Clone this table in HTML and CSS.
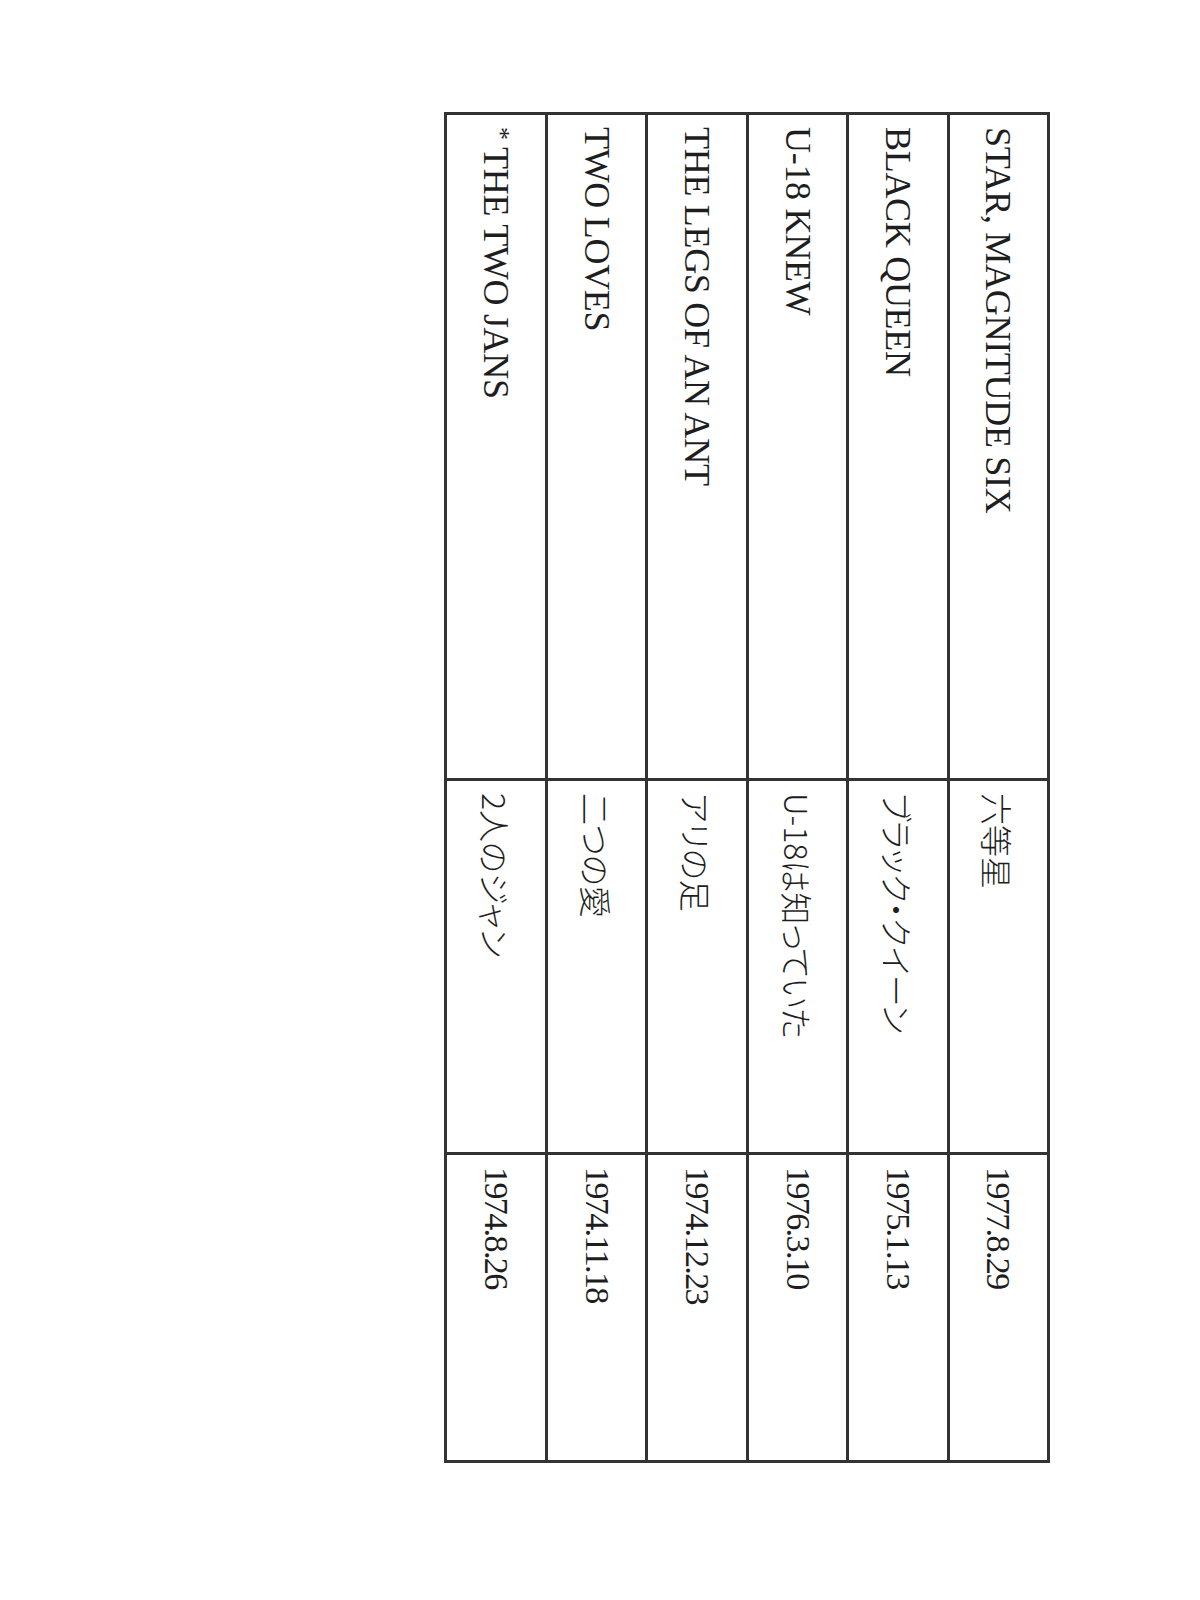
FILE: index.html
```html
<!DOCTYPE html>
<html lang="ja">
<head>
<meta charset="utf-8">
<title>Works list</title>
<link rel="stylesheet" href="styles.css">
</head>
<body>
<div class="page">
  <table class="works">
    <tbody>
      <tr>
        <td class="c1 en">STAR, MAGNITUDE SIX</td>
        <td class="c2 ja">六等星</td>
        <td class="c3 date">1977.8.29</td>
      </tr>
      <tr>
        <td class="c1 en">BLACK QUEEN</td>
        <td class="c2 ja">ブラック・クイーン</td>
        <td class="c3 date">1975.1.13</td>
      </tr>
      <tr>
        <td class="c1 en">U-18 KNEW</td>
        <td class="c2 ja">U-18は知っていた</td>
        <td class="c3 date">1976.3.10</td>
      </tr>
      <tr>
        <td class="c1 en">THE LEGS OF AN ANT</td>
        <td class="c2 ja">アリの足</td>
        <td class="c3 date">1974.12.23</td>
      </tr>
      <tr>
        <td class="c1 en">TWO LOVES</td>
        <td class="c2 ja">二つの愛</td>
        <td class="c3 date">1974.11.18</td>
      </tr>
      <tr class="last">
        <td class="c1 en"><span class="mark">*</span>THE TWO JANS</td>
        <td class="c2 ja">2人のジャン</td>
        <td class="c3 date">1974.8.26</td>
      </tr>
    </tbody>
  </table>
</div>
</body>
</html>
```

FILE: styles.css
```css
html, body {
  margin: 0;
  padding: 0;
  background: #ffffff;
}

.page {
  padding: 112px 0 0 444px;
}

.works {
  writing-mode: vertical-rl;
  text-orientation: sideways;
  border-collapse: separate;
  border-spacing: 0;
  border: 3px solid #333333;
  width: 606px;
  height: 1351px;
  color: #1e1e1e;
}

.works td {
  box-sizing: border-box;
  block-size: 100.4px;
  vertical-align: middle;
  padding: 0;
  padding-inline-start: 12px;
  border-left: 3px solid #333333;
  white-space: nowrap;
  text-align: start;
}

.works tr.last td {
  border-left: none;
  block-size: 98px;
}

.works td.c1,
.works td.c2 {
  border-bottom: 3px solid #333333;
}

.c1 { inline-size: 666px; }
.c2 { inline-size: 374px; }
.c3 { inline-size: 305px; }

.en {
  font-family: "Liberation Serif", "Times New Roman", serif;
  font-size: 36px;
  letter-spacing: -0.3px;
  line-height: 1;
}

.ja {
  font-family: "Noto Sans CJK JP", sans-serif;
  font-size: 32px;
  font-weight: 300;
  font-feature-settings: "palt";
  line-height: 1;
  padding-inline-start: 14px;
}

.date {
  font-family: "Liberation Serif", "Times New Roman", serif;
  font-size: 34px;
  letter-spacing: -1.6px;
  line-height: 1;
  padding-inline-start: 15px;
}

.mark {
  font-size: 26px;
  line-height: 0;
  vertical-align: 0.3em;
  letter-spacing: 7px;
}
```
